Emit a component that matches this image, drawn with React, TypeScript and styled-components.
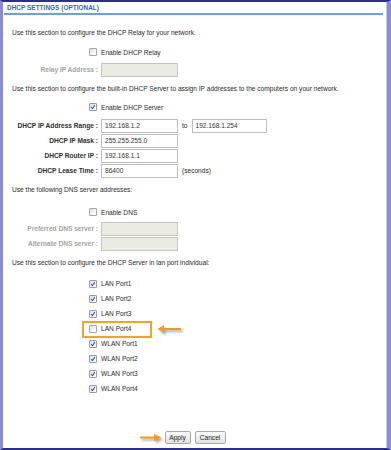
import React from "react";
import styled, { createGlobalStyle, css } from "styled-components";

const Global = createGlobalStyle`
  html, body { margin: 0; padding: 0; background: #fff; }
  body { font-family: "Liberation Sans", Arial, sans-serif; }
`;

const Frame = styled.div`
  width: 391px;
  height: 450px;
  box-sizing: border-box;
  border-top: 2px solid #2d2d8c;
  border-bottom: 2px solid #2d2d8c;
  border-left: 3px solid #8b8bd6;
  border-right: 4px solid #8b8bd6;
  box-shadow: inset -1px 0 0 #c9c9ea;
  background: #fff;
  display: flex;
  flex-direction: column;
  font-size: 6.6px;
  color: #2a2a2a;
`;

const Header = styled.div`
  height: 11px;
  margin: 0 4px 0 1px;
  border-bottom: 2px solid #6c9fe2;
  display: flex;
  align-items: center;
  padding-left: 3px;
  font-weight: bold;
  font-size: 6.4px;
  color: #3c62b6;
  letter-spacing: 0.05px;
`;

const Para = styled.div<{ $mt: number }>`
  margin-top: ${(p) => p.$mt}px;
  padding-left: 9px;
  height: 12px;
  line-height: 12px;
  white-space: nowrap;
`;

const Row = styled.div<{ $mt?: number; $h?: number }>`
  margin-top: ${(p) => p.$mt ?? 0}px;
  height: ${(p) => p.$h ?? 15}px;
  display: grid;
  grid-template-columns: 95px 1fr;
  column-gap: 3px;
  align-items: center;
  position: relative;
`;

const Label = styled.div<{ $disabled?: boolean }>`
  text-align: right;
  font-weight: bold;
  white-space: nowrap;
  color: ${(p) => (p.$disabled ? "#a3a3a3" : "#2e2e2e")};
`;

const Field = styled.div`
  display: flex;
  align-items: center;
  white-space: nowrap;
`;

const Input = styled.div<{ $disabled?: boolean; $w?: number }>`
  box-sizing: border-box;
  width: ${(p) => p.$w ?? 77}px;
  height: 14px;
  border: 1px solid ${(p) => (p.$disabled ? "#c4c4c0" : "#bdbdbd")};
  background: ${(p) => (p.$disabled ? "#ebebe4" : "#fff")};
  padding-left: 3px;
  display: flex;
  align-items: center;
  color: #333;
`;

const Suffix = styled.span`
  margin-left: 4px;
  margin-right: 4px;
`;

const BoxCell = styled.div`
  display: flex;
  justify-content: flex-end;
  padding-right: 1px;
`;

const Box = styled.span<{ $checked?: boolean }>`
  box-sizing: border-box;
  width: 8px;
  height: 8px;
  border: 1px solid #a6a6a6;
  border-radius: 1px;
  background: linear-gradient(135deg, #dcdcdc 0%, #f6f6f6 60%, #ffffff 100%);
  display: flex;
  align-items: center;
  justify-content: center;
  ${(p) =>
    p.$checked &&
    css`
      border-color: #9a9aa8;
    `}
`;

const HighlightRow = styled(Row)`
  &::after {
    content: "";
    position: absolute;
    left: 79px;
    top: 0px;
    width: 70px;
    height: 17px;
    box-sizing: border-box;
    border: 2px solid #f5a12c;
  }
`;

const SideArrow = styled.svg`
  position: absolute;
  left: 154px;
  top: 3px;
  filter: drop-shadow(2px 2px 1.2px rgba(60, 60, 60, 0.45));
`;

const Buttons = styled.div`
  margin-top: 35px;
  display: flex;
  justify-content: center;
  gap: 4px;
`;

const ButtonWrap = styled.div`
  position: relative;
  display: flex;
`;

const Button = styled.button<{ $w: number }>`
  box-sizing: border-box;
  width: ${(p) => p.$w}px;
  height: 13px;
  padding: 0;
  border: 1px solid #a9a9a9;
  border-radius: 2px;
  background: linear-gradient(#fbfbfb, #e2e2e2);
  font-family: "Liberation Sans", Arial, sans-serif;
  font-size: 6.6px;
  color: #222;
`;

const ApplyArrow = styled.svg`
  position: absolute;
  right: calc(100% + 3px);
  top: 2px;
  filter: drop-shadow(2px 2px 1.2px rgba(60, 60, 60, 0.45));
`;

const Check = () => (
  <svg width="6" height="6" viewBox="0 0 6 6">
    <path d="M1.2 3.2 L2.5 4.7 L4.8 1.1" stroke="#2f55c4" strokeWidth="1.1" fill="none" />
  </svg>
);

const CheckRow = ({ mt, h, checked, text }: { mt: number; h?: number; checked?: boolean; text: string }) => (
  <Row $mt={mt} $h={h ?? 14}>
    <BoxCell>
      <Box $checked={checked}>{checked && <Check />}</Box>
    </BoxCell>
    <Field>{text}</Field>
  </Row>
);

const ports = ["LAN Port1", "LAN Port2", "LAN Port3", "LAN Port4", "WLAN Port1", "WLAN Port2", "WLAN Port3", "WLAN Port4"];

export default function App() {
  return (
    <>
      <Global />
      <Frame>
        <Header>DHCP SETTINGS (OPTIONAL)</Header>
        <Para $mt={12}>Use this section to configure the DHCP Relay for your network.</Para>
        <CheckRow mt={6} text="Enable DHCP Relay" />
        <Row $mt={3}>
          <Label $disabled>Relay IP Address :</Label>
          <Field>
            <Input $disabled />
          </Field>
        </Row>
        <Para $mt={6}>
          Use this section to configure the built-in DHCP Server to assign IP addresses to the computers on your network.
        </Para>
        <CheckRow mt={5} checked text="Enable DHCP Server" />
        <Row $mt={4}>
          <Label>DHCP IP Address Range :</Label>
          <Field>
            <Input>192.168.1.2</Input>
            <Suffix>to</Suffix>
            <Input $w={75}>192.168.1.254</Input>
          </Field>
        </Row>
        <Row>
          <Label>DHCP IP Mask :</Label>
          <Field>
            <Input>255.255.255.0</Input>
          </Field>
        </Row>
        <Row>
          <Label>DHCP Router IP :</Label>
          <Field>
            <Input>192.168.1.1</Input>
          </Field>
        </Row>
        <Row>
          <Label>DHCP Lease Time :</Label>
          <Field>
            <Input>86400</Input>
            <Suffix>(seconds)</Suffix>
          </Field>
        </Row>
        <Para $mt={6}>Use the following DNS server addresses:</Para>
        <CheckRow mt={9} text="Enable DNS" />
        <Row $mt={2}>
          <Label $disabled>Preferred DNS server :</Label>
          <Field>
            <Input $disabled />
          </Field>
        </Row>
        <Row>
          <Label $disabled>Alternate DNS server :</Label>
          <Field>
            <Input $disabled />
          </Field>
        </Row>
        <Para $mt={6}>Use this section to configure the DHCP Server in lan port individual:</Para>
        {ports.map((p, i) => {
          const mt = i === 0 ? 7 : 0;
          if (p === "LAN Port4") {
            return (
              <HighlightRow key={p} $mt={mt}>
                <BoxCell>
                  <Box />
                </BoxCell>
                <Field>{p}</Field>
                <SideArrow width="28" height="12" viewBox="0 0 28 12">
                  <path d="M4 5 L24 5" stroke="#f39b1e" strokeWidth="2" />
                  <path d="M0.5 5 L7 1 L7 9 Z" fill="#f39b1e" />
                </SideArrow>
              </HighlightRow>
            );
          }
          return (
            <Row key={p} $mt={mt}>
              <BoxCell>
                <Box $checked>
                  <Check />
                </Box>
              </BoxCell>
              <Field>{p}</Field>
            </Row>
          );
        })}
        <Buttons>
          <ButtonWrap>
            <ApplyArrow width="22" height="10" viewBox="0 0 22 10">
              <path d="M0 4.5 L15 4.5" stroke="#f39b1e" strokeWidth="2" />
              <path d="M21 4.5 L14 0.8 L14 8.2 Z" fill="#f39b1e" />
            </ApplyArrow>
            <Button $w={26}>Apply</Button>
          </ButtonWrap>
          <ButtonWrap>
            <Button $w={31}>Cancel</Button>
          </ButtonWrap>
        </Buttons>
      </Frame>
    </>
  );
}
